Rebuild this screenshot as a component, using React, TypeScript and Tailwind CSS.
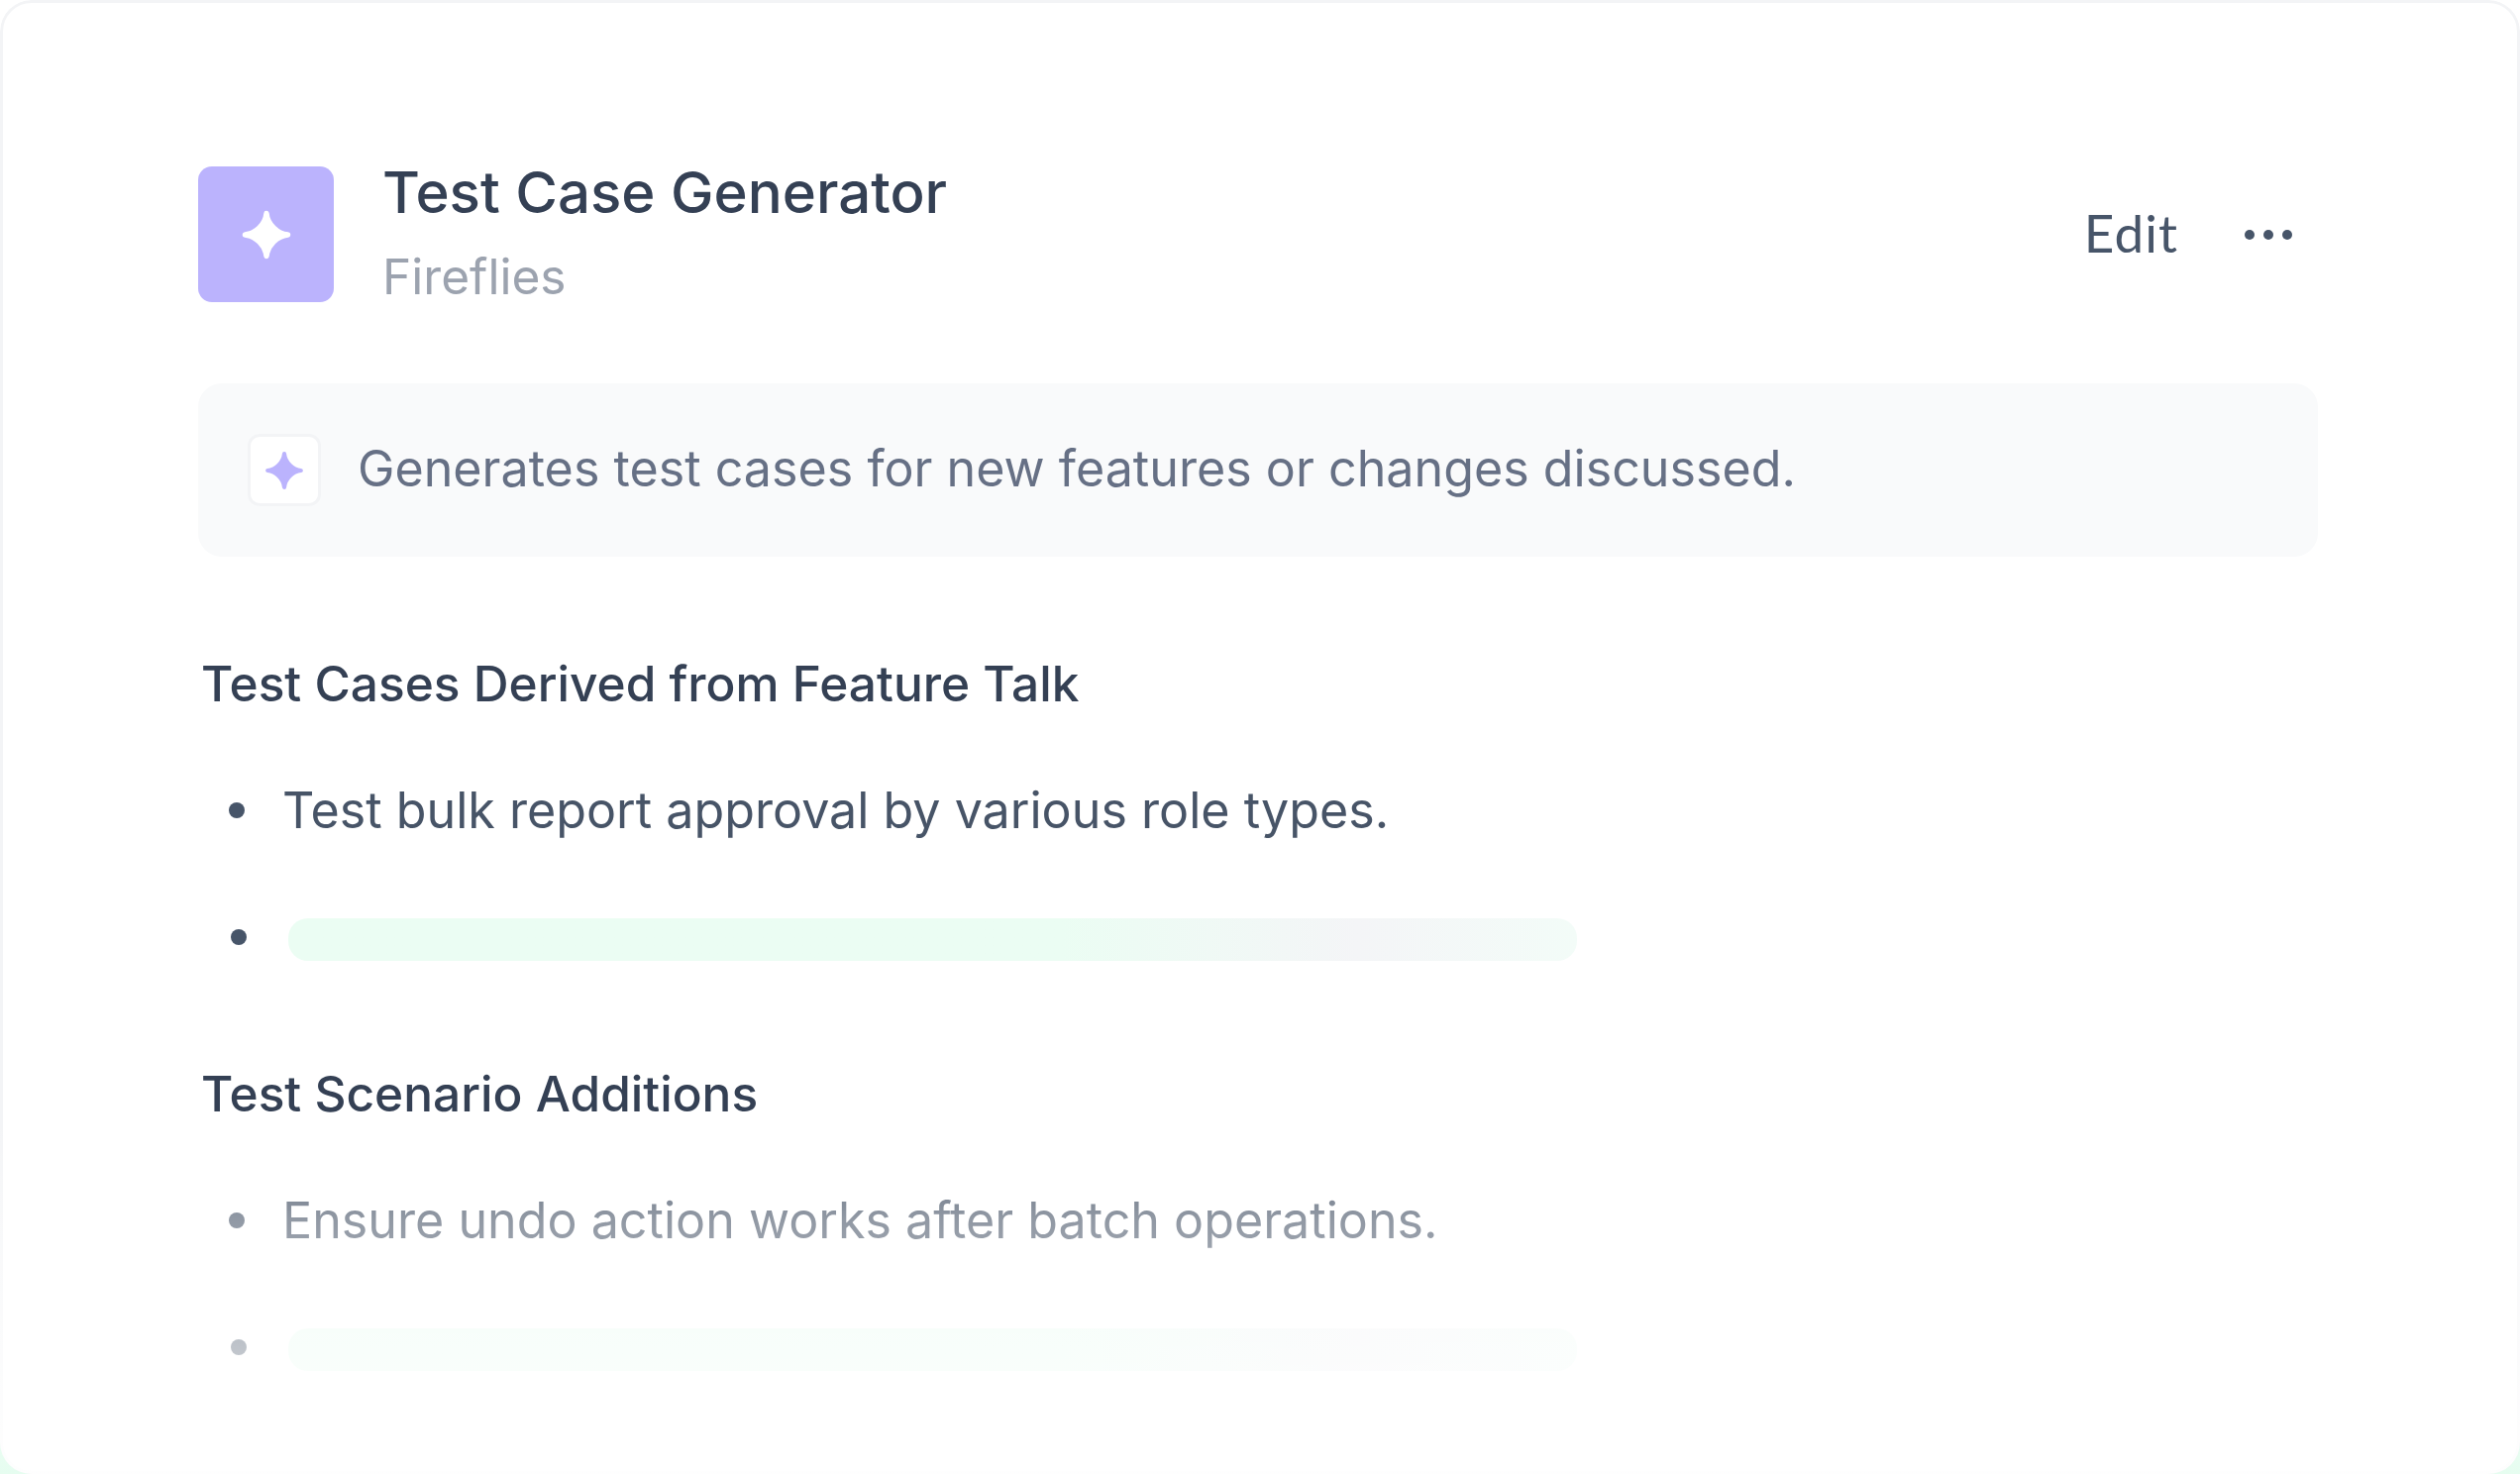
function Star({ className }: { className: string }) {
  return (
    <svg viewBox="0 0 50 50" className={className} fill="currentColor" stroke="currentColor" strokeWidth="5" strokeLinejoin="round">
      <path d="M25 5 C26 15 35 24 45 25 C35 26 26 35 25 45 C24 35 15 26 5 25 C15 24 24 15 25 5 Z" />
    </svg>
  )
}

function Bullet({ children }: { children: React.ReactNode }) {
  return (
    <li className="flex items-center h-[56px] pl-[31px]">
      <span className="w-[16px] h-[16px] rounded-full bg-[#475569] shrink-0" />
      <span className="ml-[38px] text-[50.2px] leading-[56px] text-[#475467]">{children}</span>
    </li>
  )
}

function Skeleton() {
  return (
    <li className="flex items-center h-[43px] pl-[33px]">
      <span className="w-[16px] h-[16px] rounded-full bg-[#475569] shrink-0 -mt-[6px]" />
      <span className="ml-[42px] w-[1301px] h-[43px] rounded-[20px] bg-gradient-to-r from-[#ebfdf3] from-60% via-[#f4f5f7] via-83% to-[#f3fcf8]" />
    </li>
  )
}

export default function App() {
  return (
    <div className="relative w-full h-[1488px] overflow-hidden bg-gradient-to-b from-white from-85% to-[#e6fdf0] font-['Inter',sans-serif]">
      <div className="relative h-[1488px] rounded-[32px] overflow-hidden">
        <div className="h-[1488px] rounded-[32px] border-[3px] border-[#f3f4f6] bg-white pl-[197px] pr-[201px] pt-[165px]">
          <div className="flex items-center h-[137px]">
            <div className="w-[137px] h-[137px] rounded-[14px] bg-[#bbb3fd] flex items-center justify-center shrink-0">
              <Star className="w-[54px] h-[54px] text-white" />
            </div>
            <div className="ml-[49px] flex-1 -mt-[8px]">
              <div className="relative top-[1px] text-[58.2px] leading-[70px] font-medium text-[#344054]">Test Case Generator</div>
              <div className="text-[49.6px] leading-[58px] mt-[22px] text-[#9ca3af]">Fireflies</div>
            </div>
            <div className="-mt-[3px] text-[53px] leading-[58px] text-[#475569] font-['Lato',sans-serif] tracking-[0.02em]">Edit</div>
            <div className="ml-[67px] mr-[26px] flex items-center gap-[9px]">
              <span className="w-[10px] h-[10px] rounded-full bg-[#475569]" />
              <span className="w-[10px] h-[10px] rounded-full bg-[#475569]" />
              <span className="w-[10px] h-[10px] rounded-full bg-[#475569]" />
            </div>
          </div>

          <div className="mt-[82px] h-[175px] rounded-[24px] bg-[#f9fafb] flex items-center pl-[50px]">
            <div className="w-[74px] h-[73px] rounded-[12px] bg-white border-[3px] border-[#f3f4f6] flex items-center justify-center shrink-0">
              <Star className="w-[42px] h-[42px] text-[#bbb3fd]" />
            </div>
            <div className="ml-[37px] -mt-[4px] text-[50.2px] leading-[58px] text-[#667085]">Generates test cases for new features or changes discussed.</div>
          </div>

          <h2 className="mt-[98px] pl-[3px] text-[49.6px] leading-[60px] font-medium text-[#344054]">Test Cases Derived from Feature Talk</h2>
          <ul className="mt-[70px] flex flex-col gap-[81px]">
            <Bullet>Test bulk report approval by various role types.</Bullet>
            <Skeleton />
          </ul>

          <h2 className="mt-[104px] pl-[3px] text-[49.6px] leading-[60px] font-medium text-[#344054]">Test Scenario Additions</h2>
          <ul className="mt-[70px] flex flex-col gap-[81px]">
            <Bullet>Ensure undo action works after batch operations.</Bullet>
            <Skeleton />
          </ul>
        </div>
        <div className="absolute left-0 right-0 top-[1130px] h-[358px] bg-gradient-to-b from-transparent via-white/40 via-28% to-white/90" />
      </div>
    </div>
  )
}
